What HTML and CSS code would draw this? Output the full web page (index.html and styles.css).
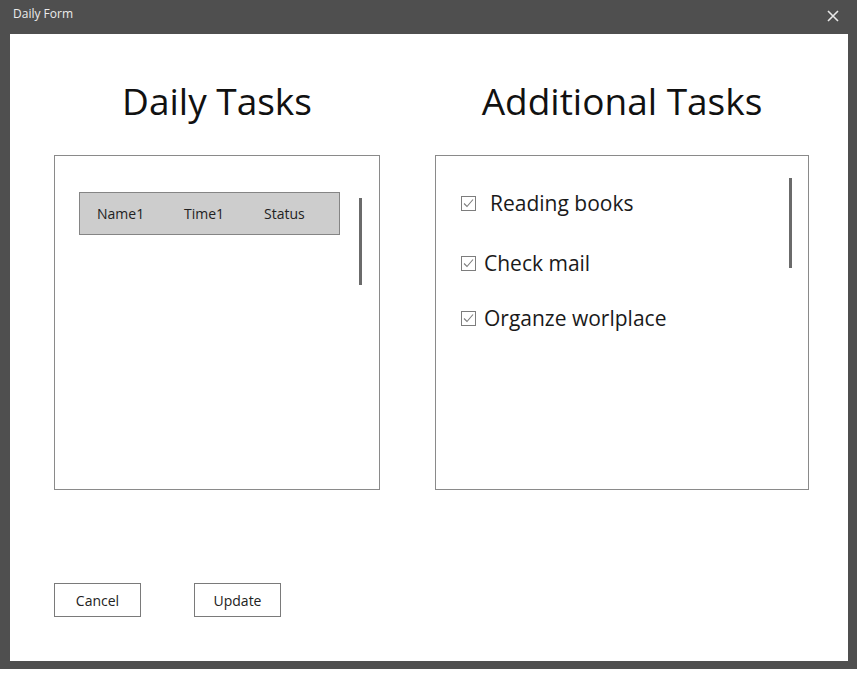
FILE: index.html
```html
<!DOCTYPE html>
<html>
<head>
<meta charset="utf-8">
<link rel="stylesheet" href="styles.css">
</head>
<body>
<div class="window">
  <div class="titlebar">
    <span class="title">Daily Form</span>
    <span class="close">
      <svg width="12" height="12" viewBox="0 0 12 12"><path d="M1 1 L11 11 M11 1 L1 11" stroke="#e8e8e8" stroke-width="1.6" fill="none"/></svg>
    </span>
  </div>
  <div class="content">
    <div class="columns">
      <section class="col col-left">
        <h1 class="heading">Daily Tasks</h1>
        <div class="panel panel-left">
          <div class="row-header">
            <span class="cell">Name1</span>
            <span class="cell">Time1</span>
            <span class="cell">Status</span>
          </div>
          <div class="scroll scroll-left"></div>
        </div>
      </section>
      <section class="col col-right">
        <h1 class="heading">Additional Tasks</h1>
        <div class="panel panel-right">
          <ul class="checks">
            <li class="check first"><svg class="box" width="15" height="15" viewBox="0 0 15 15"><rect x="0.5" y="0.5" width="14" height="14" fill="none" stroke="#7d7d7d"/><path d="M3 7.5 L6 10.5 L12 3.5" fill="none" stroke="#7d7d7d" stroke-width="1.1"/></svg><span class="label">Reading books</span></li>
            <li class="check second"><svg class="box" width="15" height="15" viewBox="0 0 15 15"><rect x="0.5" y="0.5" width="14" height="14" fill="none" stroke="#7d7d7d"/><path d="M3 7.5 L6 10.5 L12 3.5" fill="none" stroke="#7d7d7d" stroke-width="1.1"/></svg><span class="label">Check mail</span></li>
            <li class="check third"><svg class="box" width="15" height="15" viewBox="0 0 15 15"><rect x="0.5" y="0.5" width="14" height="14" fill="none" stroke="#7d7d7d"/><path d="M3 7.5 L6 10.5 L12 3.5" fill="none" stroke="#7d7d7d" stroke-width="1.1"/></svg><span class="label">Organze worlplace</span></li>
          </ul>
          <div class="scroll scroll-right"></div>
        </div>
      </section>
    </div>
    <div class="buttons">
      <button class="btn">Cancel</button>
      <button class="btn">Update</button>
    </div>
  </div>
</div>
</body>
</html>
```
FILE: styles.css
```css
* { box-sizing: border-box; }
html, body { margin: 0; padding: 0; background: #ffffff; }
body { font-family: "Open Sans", "Noto Sans", sans-serif; color: #1a1a1a; }

.window {
  width: 857px;
  height: 669px;
  background: #4f4f4f;
  display: flex;
  flex-direction: column;
  padding: 0 9px 8px 10px;
}
.titlebar {
  height: 34px;
  display: flex;
  align-items: flex-start;
  justify-content: space-between;
  margin-left: -10px;
  margin-right: -9px;
  padding: 5px 18px 0 13px;
}
.title {
  font-size: 12px;
  color: #ececec;
  line-height: 18px;
}
.close { display: flex; margin-top: 5px; }

.content {
  flex: 1;
  background: #ffffff;
  padding: 42px 0 0 44px;
  display: flex;
  flex-direction: column;
}
.columns { display: flex; gap: 55px; }
.col { display: flex; flex-direction: column; align-items: center; }
.heading {
  margin: 0 0 29px 0;
  font-weight: 400;
  font-size: 37px;
  line-height: 50px;
  color: #111;
}
.panel {
  position: relative;
  border: 1px solid #8a8a8a;
  height: 335px;
}
.panel-left { width: 326px; padding: 36px 0 0 24px; }
.panel-right { width: 374px; padding: 0 0 0 25px; }

.row-header {
  width: 261px;
  height: 43px;
  background: #cdcdcd;
  border: 1px solid #858585;
  display: flex;
  align-items: center;
  padding-left: 17px;
  font-size: 14px;
  color: #222;
}
.cell { display: inline-block; }
.cell:nth-child(1) { width: 87px; }
.cell:nth-child(2) { width: 80px; }

.scroll {
  position: absolute;
  width: 3px;
  background: #6b6b6b;
}
.scroll-left { left: 304px; top: 42px; height: 87px; }
.scroll-right { left: 353px; top: 22px; height: 90px; }

.checks { list-style: none; margin: 0; padding: 0; }
.check {
  display: flex;
  align-items: center;
  font-size: 21px;
  color: #1a1a1a;
  height: 28px;
}
.check.first { margin-top: 33px; }
.check.second { margin-top: 32px; }
.check.third { margin-top: 27px; }
.box {
  flex: none;
  margin-right: 8px;
  margin-top: 1px;
}
.first .box { margin-right: 14px; }

.buttons {
  display: flex;
  gap: 53px;
  margin-top: 93px;
}
.btn {
  width: 87px;
  height: 34px;
  border: 1px solid #7a7a7a;
  background: #ffffff;
  font-family: "Open Sans", "Noto Sans", sans-serif;
  font-size: 14px;
  color: #222;
  padding: 0;
}
```
